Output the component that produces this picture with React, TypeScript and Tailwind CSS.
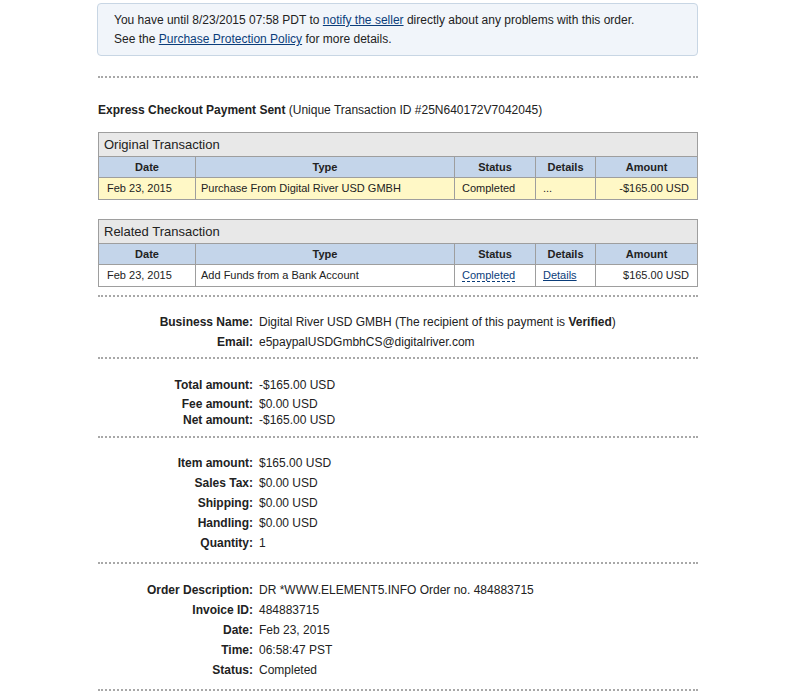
const font = { fontFamily: '"Liberation Sans", Arial, Helvetica, sans-serif' };

type Row = { date: string; type: string; status: string; details: string; amount: string };

const Dotted = ({ className = "" }: { className?: string }) => (
  <div className={`border-t-2 border-dotted border-[#a8a8a8] ${className}`}></div>
);

const TxTable = ({ title, row, yellow, links }: { title: string; row: Row; yellow?: boolean; links?: boolean }) => (
  <table className="w-[599px] border-collapse border border-[#9e9e9e] text-[11px] text-[#222] table-fixed">
    <colgroup>
      <col className="w-[97px]" />
      <col className="w-[259px]" />
      <col className="w-[81px]" />
      <col className="w-[60px]" />
      <col className="w-[102px]" />
    </colgroup>
    <thead>
      <tr className="h-[24px] bg-[#e8e8e8]">
        <th colSpan={5} className="text-left font-normal text-[13px] pl-[5px] border-b border-[#9e9e9e]">
          {title}
        </th>
      </tr>
      <tr className="h-[21px] bg-[#c4d5ea] font-bold">
        <th className="border border-[#9e9e9e]">Date</th>
        <th className="border border-[#9e9e9e]">Type</th>
        <th className="border border-[#9e9e9e]">Status</th>
        <th className="border border-[#9e9e9e]">Details</th>
        <th className="border border-[#9e9e9e]">Amount</th>
      </tr>
    </thead>
    <tbody>
      <tr className={`h-[22px] ${yellow ? "bg-[#fff8c6]" : "bg-white"}`}>
        <td className="border border-[#9e9e9e] pl-[8px]">{row.date}</td>
        <td className="border border-[#9e9e9e] pl-[5px]">{row.type}</td>
        <td className="border border-[#9e9e9e] pl-[7px]">
          {links ? (
            <span className="text-[#0b3d7a] border-b border-dashed border-[#0b3d7a] leading-[12px] inline-block">{row.status}</span>
          ) : (
            row.status
          )}
        </td>
        <td className="border border-[#9e9e9e] pl-[7px]">
          {links ? <a className="text-[#0b3d7a] underline">{row.details}</a> : row.details}
        </td>
        <td className="border border-[#9e9e9e] text-right pr-[8px]">{row.amount}</td>
      </tr>
    </tbody>
  </table>
);

const Field = ({ label, children }: { label: string; children: React.ReactNode }) => (
  <>
    <div className="text-right font-bold">{label}:</div>
    <div>{children}</div>
  </>
);

export default function App() {
  return (
    <div style={font} className="w-[809px] h-[693px] bg-white text-[12px] text-[#222] overflow-hidden">
      <div className="ml-[98px] w-[600px]">
        <div className="-ml-px w-[601px] mt-[3px] h-[53px] rounded-[4px] border border-[#c8d6e4] bg-[#f1f5fa] pl-[16px] pt-[7px] leading-[19px] text-[12px]">
          <p>
            You have until 8/23/2015 07:58 PDT to{" "}
            <a className="text-[#0b3d7a] underline">notify the seller</a> directly about any problems with this order.
          </p>
          <p>
            See the <a className="text-[#0b3d7a] underline">Purchase Protection Policy</a> for more details.
          </p>
        </div>

        <Dotted className="mt-[20px]" />

        <p className="mt-[24px] leading-[16px]">
          <span className="font-bold">Express Checkout Payment Sent</span> (Unique Transaction ID #25N640172V7042045)
        </p>

        <div className="mt-[14px]">
          <TxTable
            title="Original Transaction"
            yellow
            row={{ date: "Feb 23, 2015", type: "Purchase From Digital River USD GMBH", status: "Completed", details: "...", amount: "-$165.00 USD" }}
          />
        </div>

        <div className="mt-[19px]">
          <TxTable
            title="Related Transaction"
            links
            row={{ date: "Feb 23, 2015", type: "Add Funds from a Bank Account", status: "Completed", details: "Details", amount: "$165.00 USD" }}
          />
        </div>

        <Dotted className="mt-[8px]" />

        <div className="grid grid-cols-[155px_1fr] gap-x-[6px] leading-[19.5px] mt-[16px]">
          <Field label="Business Name">
            Digital River USD GMBH (The recipient of this payment is <span className="font-bold">Verified</span>)
          </Field>
          <Field label="Email">e5paypalUSDGmbhCS@digitalriver.com</Field>
        </div>

        <Dotted className="mt-[5px]" />

        <div className="grid grid-cols-[155px_1fr] gap-x-[6px] mt-[17px]">
          <div className="text-right font-bold leading-[19px]">Total amount:</div>
          <div className="leading-[19px]">-$165.00 USD</div>
          <div className="text-right font-bold leading-[16px] mt-[1px]">Fee amount:</div>
          <div className="leading-[16px] mt-[1px]">$0.00 USD</div>
          <div className="text-right font-bold leading-[16px]">Net amount:</div>
          <div className="leading-[16px]">-$165.00 USD</div>
        </div>

        <Dotted className="mt-[8px]" />

        <div className="grid grid-cols-[155px_1fr] gap-x-[6px] leading-[20px] mt-[15px]">
          <Field label="Item amount">$165.00 USD</Field>
          <Field label="Sales Tax">$0.00 USD</Field>
          <Field label="Shipping">$0.00 USD</Field>
          <Field label="Handling">$0.00 USD</Field>
          <Field label="Quantity">1</Field>
        </div>

        <Dotted className="mt-[9px]" />

        <div className="grid grid-cols-[155px_1fr] gap-x-[6px] leading-[20px] mt-[16px]">
          <Field label="Order Description">DR *WWW.ELEMENT5.INFO Order no. 484883715</Field>
          <Field label="Invoice ID">484883715</Field>
          <Field label="Date">Feb 23, 2015</Field>
          <Field label="Time">06:58:47 PST</Field>
          <Field label="Status">Completed</Field>
        </div>

        <Dotted className="mt-[9px]" />
      </div>
    </div>
  );
}
